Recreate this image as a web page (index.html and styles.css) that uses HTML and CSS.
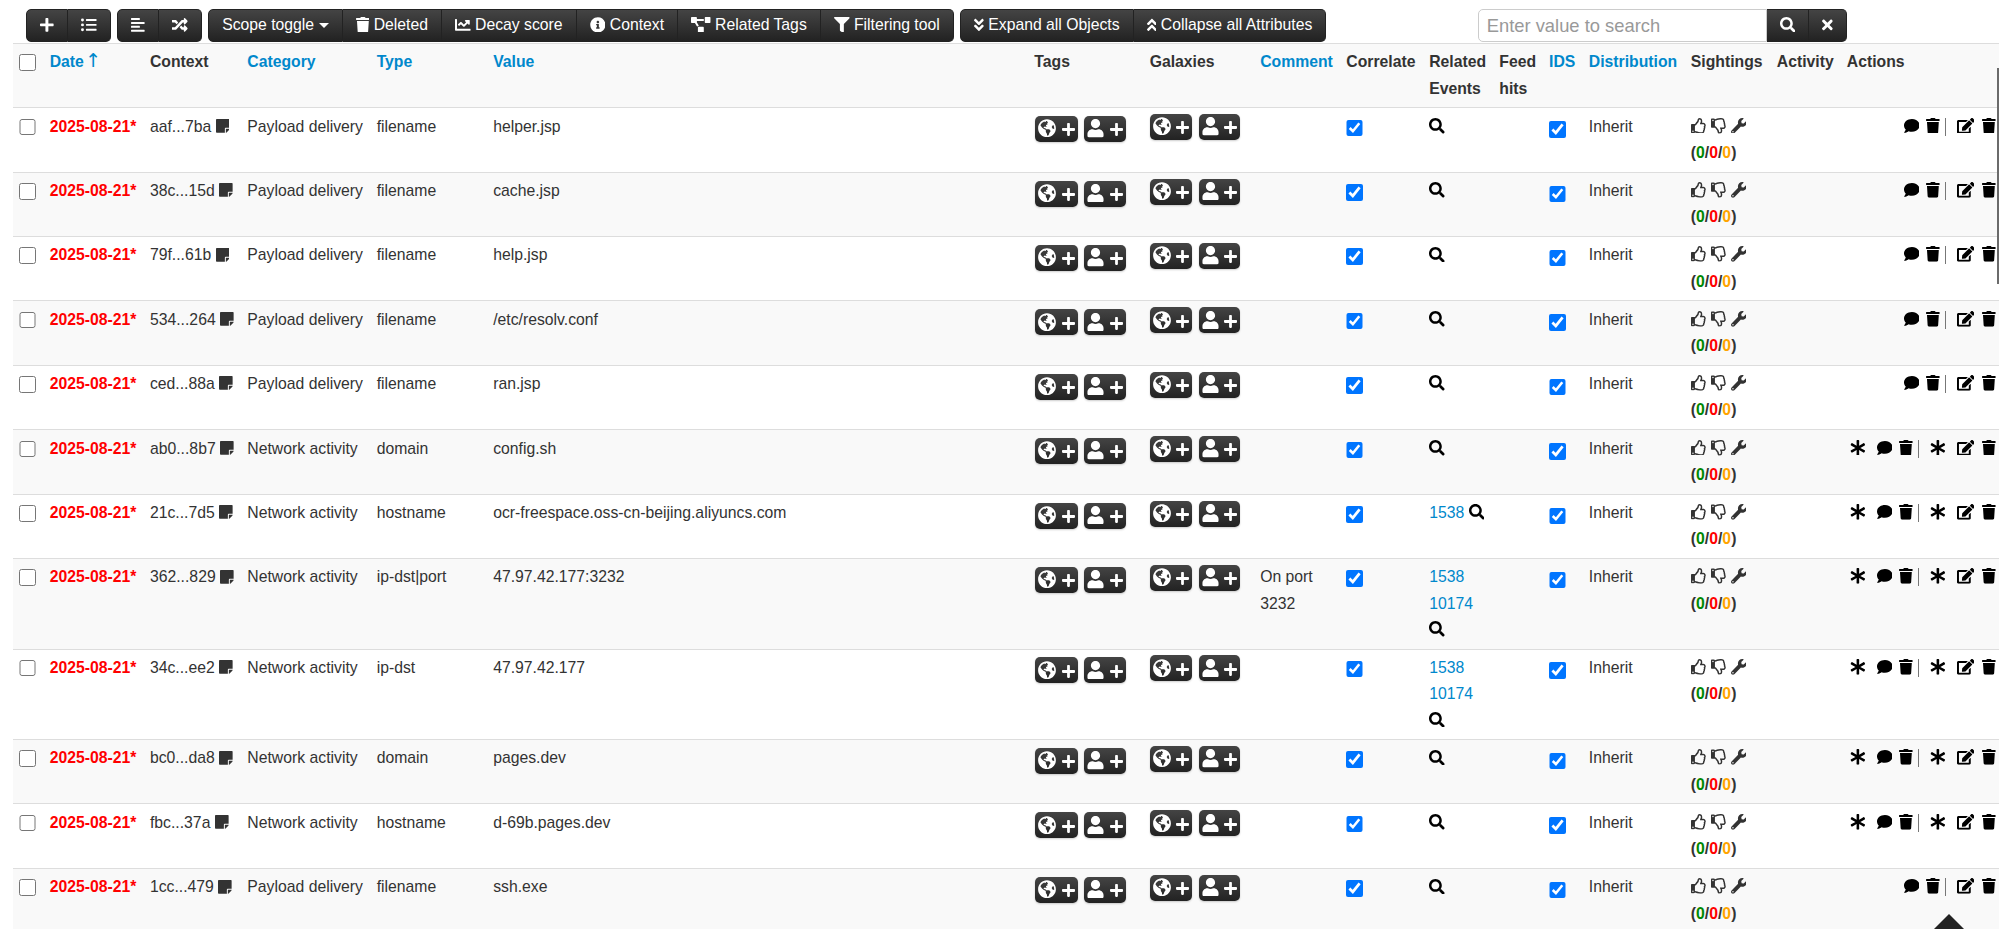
FILE: index.html
```html
<!DOCTYPE html>
<html lang="en">

<head>
  <meta charset="UTF-8">
  <meta name="viewport" content="width=device-width, initial-scale=1.0">
  <title>Event attributes</title>
  <link rel="stylesheet" href="styles.css">
</head>

<body>
  <svg class="sprite">
    <symbol id="plus" viewBox="0 0 448 512"><path d="M416 208H272V64c0-17.67-14.33-32-32-32h-32c-17.67 0-32 14.33-32 32v144H32c-17.67 0-32 14.33-32 32v32c0 17.67 14.33 32 32 32h144v144c0 17.67 14.33 32 32 32h32c17.67 0 32-14.33 32-32V304h144c17.67 0 32-14.33 32-32v-32c0-17.67-14.33-32-32-32z"/></symbol>
    <symbol id="list" viewBox="0 0 512 512"><path d="M48 48a48 48 0 1 0 48 48 48 48 0 0 0-48-48zm0 160a48 48 0 1 0 48 48 48 48 0 0 0-48-48zm0 160a48 48 0 1 0 48 48 48 48 0 0 0-48-48zm448 16H176a16 16 0 0 0-16 16v32a16 16 0 0 0 16 16h320a16 16 0 0 0 16-16v-32a16 16 0 0 0-16-16zm0-320H176a16 16 0 0 0-16 16v32a16 16 0 0 0 16 16h320a16 16 0 0 0 16-16V80a16 16 0 0 0-16-16zm0 160H176a16 16 0 0 0-16 16v32a16 16 0 0 0 16 16h320a16 16 0 0 0 16-16v-32a16 16 0 0 0-16-16z"/></symbol>
    <symbol id="align" viewBox="0 0 448 512"><path d="M12.83 352h262.34A12.82 12.82 0 0 0 288 339.17v-38.34A12.82 12.82 0 0 0 275.17 288H12.83A12.82 12.82 0 0 0 0 300.83v38.34A12.82 12.82 0 0 0 12.83 352zm0-256h262.34A12.82 12.82 0 0 0 288 83.17V44.83A12.82 12.82 0 0 0 275.17 32H12.83A12.82 12.82 0 0 0 0 44.83v38.34A12.82 12.82 0 0 0 12.83 96zM432 160H16a16 16 0 0 0-16 16v32a16 16 0 0 0 16 16h416a16 16 0 0 0 16-16v-32a16 16 0 0 0-16-16zm0 256H16a16 16 0 0 0-16 16v32a16 16 0 0 0 16 16h416a16 16 0 0 0 16-16v-32a16 16 0 0 0-16-16z"/></symbol>
    <symbol id="random" viewBox="0 0 512 512"><path d="M504.971 359.029c9.373 9.373 9.373 24.569 0 33.941l-80 79.984c-15.01 15.01-40.971 4.49-40.971-16.971V416h-58.785a12.004 12.004 0 0 1-8.773-3.812l-70.556-75.596 53.333-57.143L352 336h32v-39.981c0-21.438 25.943-31.998 40.971-16.971l80 79.981zM12 176h84l52.781 56.551 53.333-57.143-70.556-75.596A11.999 11.999 0 0 0 122.785 96H12c-6.627 0-12 5.373-12 12v56c0 6.627 5.373 12 12 12zm372 0v39.984c0 21.46 25.961 31.98 40.971 16.971l80-79.984c9.373-9.373 9.373-24.569 0-33.941l-80-79.981C409.943 24.021 384 34.582 384 56.019V96h-58.785a12.004 12.004 0 0 0-8.773 3.812L96 336H12c-6.627 0-12 5.373-12 12v56c0 6.627 5.373 12 12 12h110.785c3.326 0 6.503-1.381 8.773-3.812L352 176h32z"/></symbol>
    <symbol id="trash" viewBox="0 0 448 512"><path d="M432 32H312l-9.4-18.7A24 24 0 0 0 281.1 0H166.8a23.72 23.72 0 0 0-21.4 13.3L136 32H16A16 16 0 0 0 0 48v32a16 16 0 0 0 16 16h416a16 16 0 0 0 16-16V48a16 16 0 0 0-16-16zM53.2 467a48 48 0 0 0 47.9 45h245.8a48 48 0 0 0 47.9-45L416 128H32z"/></symbol>
    <symbol id="chart" viewBox="0 0 512 512"><path d="M496 384H64V80c0-8.84-7.16-16-16-16H16C7.16 64 0 71.16 0 80v336c0 17.67 14.33 32 32 32h464c8.84 0 16-7.16 16-16v-32c0-8.84-7.16-16-16-16zM464 96H345.94c-21.38 0-32.09 25.85-16.97 40.97l32.4 32.4L288 242.75l-73.37-73.37c-12.5-12.5-32.76-12.5-45.25 0l-68.69 68.69c-6.25 6.25-6.25 16.38 0 22.63l22.62 22.62c6.25 6.25 16.38 6.25 22.63 0L192 237.25l73.37 73.37c12.5 12.5 32.76 12.5 45.25 0l96-96 32.4 32.4c15.12 15.12 40.97 4.41 40.97-16.97V112c.01-8.84-7.15-16-15.99-16z"/></symbol>
    <symbol id="info" viewBox="0 0 512 512"><path d="M256 8C119.043 8 8 119.083 8 256c0 136.997 111.043 248 248 248s248-111.003 248-248C504 119.083 392.957 8 256 8zm0 110c23.196 0 42 18.804 42 42s-18.804 42-42 42-42-18.804-42-42 18.804-42 42-42zm56 254c0 6.627-5.373 12-12 12h-88c-6.627 0-12-5.373-12-12v-24c0-6.627 5.373-12 12-12h12v-64h-12c-6.627 0-12-5.373-12-12v-24c0-6.627 5.373-12 12-12h64c6.627 0 12 5.373 12 12v100h12c6.627 0 12 5.373 12 12v24z"/></symbol>
    <symbol id="diagram" viewBox="0 0 640 512"><path d="M384 320H256c-17.67 0-32 14.33-32 32v128c0 17.67 14.33 32 32 32h128c17.67 0 32-14.33 32-32V352c0-17.67-14.33-32-32-32zM192 32c0-17.67-14.33-32-32-32H32C14.33 0 0 14.33 0 32v128c0 17.67 14.33 32 32 32h95.72l73.16 128.04C211.98 300.98 232.4 288 256 288h.28L192 175.51V128h224V64H192V32zM608 0H480c-17.67 0-32 14.33-32 32v128c0 17.67 14.33 32 32 32h128c17.67 0 32-14.33 32-32V32c0-17.67-14.33-32-32-32z"/></symbol>
    <symbol id="filter" viewBox="0 0 512 512"><path d="M487.976 0H24.028C2.71 0-8.047 25.866 7.058 40.971L192 225.941V432c0 7.831 3.821 15.17 10.237 19.662l80 55.98C298.02 518.69 320 507.493 320 487.98V225.941l184.947-184.97C520.021 25.896 509.338 0 487.976 0z"/></symbol>
    <symbol id="down" viewBox="0 0 320 512"><path d="M143 256.3L7 120.3c-9.4-9.4-9.4-24.6 0-33.9l22.6-22.6c9.4-9.4 24.6-9.4 33.9 0l96.4 96.4 96.4-96.4c9.4-9.4 24.6-9.4 33.9 0L313 86.3c9.4 9.4 9.4 24.6 0 33.9l-136 136c-9.4 9.5-24.6 9.5-34 .1zm34 192l136-136c9.4-9.4 9.4-24.6 0-33.9l-22.6-22.6c-9.4-9.4-24.6-9.4-33.9 0L160 352.1l-96.4-96.4c-9.4-9.4-24.6-9.4-33.9 0L7 278.3c-9.4 9.4-9.4 24.6 0 33.9l136 136c9.4 9.5 24.6 9.5 34 .1z"/></symbol>
    <symbol id="search" viewBox="0 0 512 512"><path d="M505 442.7L405.3 343c-4.5-4.5-10.6-7-17-7H372c27.6-35.3 44-79.7 44-128C416 93.1 322.9 0 208 0S0 93.1 0 208s93.1 208 208 208c48.3 0 92.7-16.4 128-44v16.3c0 6.4 2.5 12.5 7 17l99.7 99.7c9.4 9.4 24.6 9.4 33.9 0l28.3-28.3c9.4-9.4 9.4-24.6.1-34zM208 336c-70.7 0-128-57.2-128-128 0-70.7 57.2-128 128-128 70.7 0 128 57.2 128 128 0 70.7-57.2 128-128 128z"/></symbol>
    <symbol id="times" viewBox="0 0 352 512"><path d="M242.72 256l100.07-100.07c12.28-12.28 12.28-32.19 0-44.48l-22.24-22.24c-12.28-12.28-32.19-12.28-44.48 0L176 189.28 75.93 89.21c-12.28-12.28-32.19-12.28-44.48 0L9.21 111.45c-12.28 12.28-12.28 32.19 0 44.48L109.28 256 9.21 356.07c-12.28 12.28-12.28 32.19 0 44.48l22.24 22.24c12.28 12.28 32.2 12.28 44.48 0L176 322.72l100.07 100.07c12.28 12.28 32.2 12.28 44.48 0l22.24-22.24c12.28-12.28 12.28-32.19 0-44.48L242.72 256z"/></symbol>
    <symbol id="note" viewBox="0 0 448 512"><path d="M312 320h136V56c0-13.3-10.7-24-24-24H24C10.7 32 0 42.7 0 56v400c0 13.3 10.7 24 24 24h264V344c0-13.2 10.8-24 24-24zm129 55l-98 98c-4.5 4.5-10.6 7-17 7h-6V352h128v6.1c0 6.3-2.5 12.4-7 16.9z"/></symbol>
    <symbol id="comment" viewBox="0 0 512 512"><path d="M256 32C114.6 32 0 125.1 0 240c0 49.6 21.4 95 57 130.7C44.5 421.1 2.7 466 2.2 466.5c-2.2 2.3-2.8 5.7-1.5 8.7S4.8 480 8 480c66.3 0 116-31.8 140.6-51.4 32.7 12.3 69 19.4 107.4 19.4 141.4 0 256-93.1 256-208S397.4 32 256 32z"/></symbol>
    <symbol id="wrench" viewBox="0 0 512 512"><path d="M507.73 109.1c-2.24-9.03-13.54-12.09-20.12-5.51l-74.36 74.36-67.88-11.31-11.31-67.88 74.36-74.36c6.62-6.62 3.43-17.9-5.66-20.16-47.38-11.74-99.55.91-136.58 37.93-39.64 39.64-50.55 97.1-34.05 147.2L18.74 402.76c-24.99 24.99-24.99 65.51 0 90.5 24.99 24.99 65.51 24.99 90.5 0l213.21-213.21c50.12 16.71 107.47 5.68 147.37-34.22 37.07-37.07 49.7-89.32 37.91-136.73zM64 472c-13.25 0-24-10.75-24-24 0-13.26 10.75-24 24-24s24 10.74 24 24c0 13.25-10.75 24-24 24z"/></symbol>
    <symbol id="user" viewBox="0 0 448 512"><path d="M224 256c70.7 0 128-57.3 128-128S294.7 0 224 0 96 57.3 96 128s57.3 128 128 128zm89.6 32h-16.7c-22.2 10.2-46.9 16-72.9 16s-50.6-5.8-72.9-16h-16.7C60.2 288 0 348.2 0 422.4V464c0 26.5 21.5 48 48 48h352c26.5 0 48-21.5 48-48v-41.6c0-74.2-60.2-134.4-134.4-134.4z"/></symbol>
    <symbol id="globe" viewBox="0 0 496 512"><path d="M248 8C111.03 8 0 119.03 0 256s111.03 248 248 248 248-111.03 248-248S384.97 8 248 8zm82.29 357.6c-3.9 3.88-7.99 7.95-11.31 11.28-2.99 3-5.1 6.7-6.17 10.71-1.51 5.66-2.73 11.38-4.77 16.87l-17.39 46.85c-13.76 3-28 4.69-42.65 4.69v-27.38c1.69-12.62-7.64-36.26-22.63-51.25-6-6-9.37-14.14-9.37-22.63v-32.01c0-11.64-6.27-22.34-16.46-27.97-14.37-7.95-34.81-19.06-48.81-26.11-11.48-5.78-22.1-13.14-31.65-21.75l-.8-.72a114.792 114.792 0 0 1-18.06-20.74c-9.38-13.77-24.66-36.42-34.59-51.14 20.47-45.5 57.36-82.04 103.2-101.89l24.01 12.01C203.48 89.74 216 82.01 216 70.11v-11.3c7.99-1.29 16.12-2.11 24.39-2.42l28.3 28.3c6.25 6.25 6.25 16.38 0 22.63L264 112l-10.34 10.34c-3.12 3.12-3.12 8.19 0 11.31l4.69 4.69c3.12 3.12 3.12 8.19 0 11.31l-8 8a8.008 8.008 0 0 1-5.66 2.34h-8.99c-2.08 0-4.08.81-5.58 2.27l-9.92 9.65a8.008 8.008 0 0 0-1.58 9.31l15.59 31.19c2.66 5.32-1.21 11.58-7.15 11.58h-5.64c-1.93 0-3.79-.7-5.24-1.96l-9.28-8.06a16.017 16.017 0 0 0-15.55-3.1l-31.17 10.39a11.95 11.95 0 0 0-8.17 11.34c0 4.53 2.56 8.66 6.61 10.69l11.08 5.54c9.41 4.71 19.79 7.16 30.31 7.16s22.59 27.29 32 32h66.75c8.49 0 16.62 3.37 22.63 9.37l13.69 13.69a30.503 30.503 0 0 1 8.93 21.57 46.536 46.536 0 0 1-13.72 32.98zM417 274.25c-5.79-1.45-10.84-5-14.15-9.97l-17.98-26.97a23.97 23.97 0 0 1 0-26.62l19.59-29.38c2.32-3.47 5.5-6.29 9.24-8.15l12.98-6.49C440.2 193.59 448 223.87 448 256c0 8.67-.74 17.16-1.82 25.54L417 274.25z"/></symbol>
    <symbol id="thumb" viewBox="0 0 512 512"><path d="M466.27 286.69C475.04 271.84 480 256 480 236.85c0-44.015-37.218-85.58-85.82-85.58H357.7c4.92-12.81 8.85-28.13 8.85-46.54C366.55 31.936 328.86 0 271.28 0c-61.607 0-58.093 94.933-71.76 108.6-22.747 22.747-49.615 66.447-68.76 83.4H32c-17.673 0-32 14.327-32 32v240c0 17.673 14.327 32 32 32h64c14.893 0 27.408-10.174 30.978-23.95 44.509 1.001 75.06 39.94 177.802 39.94 7.22 0 15.22.01 22.22.01 77.117 0 111.986-39.423 112.94-95.33 13.319-18.425 20.299-43.122 17.34-66.99 9.854-18.452 13.664-40.343 8.99-62.99zm-61.75 53.83c12.56 21.13 1.26 49.41-13.94 57.57 7.7 48.78-17.608 65.9-53.12 65.9h-37.82c-71.639 0-118.029-37.82-171.64-37.82V240h10.92c28.36 0 67.98-70.89 94.54-97.46 28.36-28.36 18.91-75.63 37.82-94.54 47.27 0 47.27 32.98 47.27 56.73 0 39.17-28.36 56.72-28.36 94.54h103.99c21.11 0 37.73 18.91 37.82 37.82.09 18.9-12.82 37.81-22.27 37.81 13.489 14.555 16.371 45.236-5.21 65.62zM88 432c0 13.255-10.745 24-24 24s-24-10.745-24-24 10.745-24 24-24 24 10.745 24 24z"/></symbol>
    <symbol id="asterisk" viewBox="0 0 512 512"><path d="M478.21 334.093L336 256l142.21-78.093c11.795-6.477 15.961-21.384 9.232-33.037l-19.48-33.741c-6.728-11.653-21.72-15.499-33.227-8.523L296 186.718l3.475-162.204C299.763 11.061 288.937 0 275.48 0h-38.96c-13.456 0-24.283 11.061-23.994 24.514L216 186.718 77.265 102.607c-11.506-6.976-26.499-3.13-33.227 8.523l-19.48 33.741c-6.728 11.653-2.562 26.56 9.233 33.037L176 256 33.79 334.093c-11.795 6.477-15.961 21.384-9.232 33.037l19.48 33.741c6.728 11.653 21.721 15.499 33.227 8.523L216 325.282l-3.475 162.204C212.237 500.939 223.064 512 236.52 512h38.961c13.456 0 24.283-11.061 23.995-24.514L296 325.282l138.735 84.111c11.506 6.976 26.499 3.13 33.227-8.523l19.48-33.741c6.728-11.653 2.563-26.559-9.232-33.036z"/></symbol>
    <symbol id="edit" viewBox="0 0 576 512"><path d="M402.6 83.2l90.2 90.2c3.8 3.8 3.8 10 0 13.8L274.4 405.6l-92.8 10.3c-12.4 1.4-22.9-9.1-21.5-21.5l10.3-92.8L388.8 83.2c3.8-3.8 10-3.8 13.8 0zm162-22.9l-48.8-48.8c-15.2-15.2-39.9-15.2-55.2 0l-35.4 35.4c-3.8 3.8-3.8 10 0 13.8l90.2 90.2c3.8 3.8 10 3.8 13.8 0l35.4-35.4c15.2-15.3 15.2-40 0-55.2zM384 346.2V448H64V128h229.8c3.2 0 6.2-1.3 8.5-3.5l40-40c7.6-7.6 2.2-20.5-8.5-20.5H48C21.5 64 0 85.5 0 112v352c0 26.5 21.5 48 48 48h352c26.5 0 48-21.5 48-48V306.2c0-10.7-12.9-16-20.5-8.5l-40 40c-2.2 2.3-3.5 5.3-3.5 8.5z"/></symbol>
  </svg>

  <div class="toolbar">
    <div class="btn-group">
      <button class="btn"><svg class="icon narrow"><use href="#plus"/></svg></button>
      <button class="btn"><svg class="icon"><use href="#list"/></svg></button>
    </div>
    <div class="btn-group">
      <button class="btn"><svg class="icon narrow"><use href="#align"/></svg></button>
      <button class="btn"><svg class="icon"><use href="#random"/></svg></button>
    </div>
    <div class="btn-group">
      <button class="btn">Scope toggle <span class="caret"></span></button>
      <button class="btn"><svg class="icon narrow"><use href="#trash"/></svg> Deleted</button>
      <button class="btn"><svg class="icon"><use href="#chart"/></svg> Decay score</button>
      <button class="btn"><svg class="icon"><use href="#info"/></svg> Context</button>
      <button class="btn"><svg class="icon wide"><use href="#diagram"/></svg> Related Tags</button>
      <button class="btn"><svg class="icon"><use href="#filter"/></svg> Filtering tool</button>
    </div>
    <div class="btn-group">
      <button class="btn"><svg class="icon slim"><use href="#down"/></svg> Expand all Objects</button>
      <button class="btn"><svg class="icon slim flip"><use href="#down"/></svg> Collapse all Attributes</button>
    </div>
    <div class="search">
      <input type="text" class="search-input" placeholder="Enter value to search">
      <button class="btn"><svg class="icon"><use href="#search"/></svg></button>
      <button class="btn"><svg class="icon times"><use href="#times"/></svg></button>
    </div>
  </div>

  <table class="attributes">
    <thead>
      <tr>
        <th><input type="checkbox" class="select"></th>
        <th><a>Date <span class="arrow">↑</span></a></th>
        <th>Context</th>
        <th><a>Category</a></th>
        <th><a>Type</a></th>
        <th><a>Value</a></th>
        <th>Tags</th>
        <th>Galaxies</th>
        <th><a>Comment</a></th>
        <th>Correlate</th>
        <th>Related Events</th>
        <th>Feed hits</th>
        <th><a>IDS</a></th>
        <th><a>Distribution</a></th>
        <th>Sightings</th>
        <th>Activity</th>
        <th>Actions</th>
      </tr>
    </thead>
    <tbody id="rows"></tbody>
  </table>

  <div class="scroll-thumb"></div>
  <div class="to-top"></div>

  <script>
    const P = 'Payload delivery';
    const N = 'Network activity';

    // uuid, category, type, value, related events, comment
    const attributes = [
      ['aaf...7ba', P, 'filename', 'helper.jsp'],
      ['38c...15d', P, 'filename', 'cache.jsp'],
      ['79f...61b', P, 'filename', 'help.jsp'],
      ['534...264', P, 'filename', '/etc/resolv.conf'],
      ['ced...88a', P, 'filename', 'ran.jsp'],
      ['ab0...8b7', N, 'domain', 'config.sh'],
      ['21c...7d5', N, 'hostname', 'ocr-freespace.oss-cn-beijing.aliyuncs.com', [1538]],
      ['362...829', N, 'ip-dst|port', '47.97.42.177:3232', [1538, 10174], 'On port 3232'],
      ['34c...ee2', N, 'ip-dst', '47.97.42.177', [1538, 10174]],
      ['bc0...da8', N, 'domain', 'pages.dev'],
      ['fbc...37a', N, 'hostname', 'd-69b.pages.dev'],
      ['1cc...479', P, 'filename', 'ssh.exe']
    ];

    function icon(name, extra = '') {
      return `<svg class="icon ${extra}"><use href="#${name}"/></svg>`;
    }

    function tagButtons(cls) {
      return `<div class="tag-buttons ${cls}">
        <button class="tag-btn">${icon('globe', 'big')}${icon('plus', 'add')}</button>
        <button class="tag-btn">${icon('user', 'big person')}${icon('plus', 'add')}</button>
      </div>`;
    }

    function actions(category) {
      const enrich = category === N ? icon('asterisk', 'enrich') : '';
      return `<div class="actions">${enrich}${icon('comment', 'talk')}${icon('trash', 'narrow')}<span class="sep"></span>${enrich}${icon('edit', 'pen')}${icon('trash', 'narrow')}</div>`;
    }

    document.getElementById('rows').innerHTML = attributes.map(([uuid, category, type, value, related = [], comment = '']) => `
      <tr>
        <td><input type="checkbox" class="select"></td>
        <td class="date">2025-08-21*</td>
        <td>${uuid} ${icon('note', 'narrow note')}</td>
        <td>${category}</td>
        <td>${type}</td>
        <td>${value}</td>
        <td>${tagButtons('')}</td>
        <td>${tagButtons('galaxies')}</td>
        <td>${comment}</td>
        <td><input type="checkbox" class="correlate" checked></td>
        <td>${related.map(id => `<a>${id}</a> `).join('')}${icon('search', 'black')}</td>
        <td></td>
        <td><input type="checkbox" class="ids" checked></td>
        <td>Inherit</td>
        <td><div class="votes">${icon('thumb')}${icon('thumb', 'flip')}${icon('wrench')}</div>
          <b>(<span class="good">0</span>/<span class="bad">0</span>/<span class="expired">0</span>)</b></td>
        <td></td>
        <td>${actions(category)}</td>
      </tr>`).join('');
  </script>
</body>

</html>
```
FILE: styles.css
```css
* {
  box-sizing: border-box;
}

body {
  margin: 0;
  height: 929px;
  overflow: hidden;
  background: #fff;
  color: #333;
  font-family: "Liberation Sans", Arial, sans-serif;
  font-size: 15.75px;
  line-height: 26.25px;
}

.sprite {
  display: none;
}

.icon {
  width: 15.75px;
  height: 15.75px;
  fill: currentColor;
  vertical-align: -2px;
}

.narrow {
  width: 13.8px;
}

.wide {
  width: 19.7px;
}

.slim {
  width: 9.85px;
}

.times {
  width: 10.8px;
}

.flip {
  transform: scaleY(-1);
}

/* toolbar */

.toolbar {
  display: flex;
  height: 42.9px;
  padding: 9.4px 0 0 26.3px;
}

.btn-group {
  display: flex;
  height: 33px;
  margin-right: 6.4px;
}

.btn {
  height: 33px;
  padding: 0 13px 1px;
  border: 1px solid #222;
  border-left-width: 0;
  background: linear-gradient(#444, #222);
  color: #fff;
  font: inherit;
  line-height: 30px;
  white-space: nowrap;
}

.btn:first-child {
  border-left-width: 1px;
  border-radius: 5px 0 0 5px;
}

.btn:last-child {
  border-radius: 0 5px 5px 0;
}

.search .btn:not(:last-child) {
  border-radius: 0;
}

.caret {
  display: inline-block;
  border: 5.25px solid transparent;
  border-top-color: #fff;
  border-bottom: 0;
  vertical-align: 2px;
}

.search {
  display: flex;
  height: 33px;
  margin-left: 145px;
}

.search-input {
  width: 289px;
  height: 33px;
  padding: 0 8px;
  border: 1px solid #ccc;
  border-radius: 5px 0 0 5px;
  font: 18.375px "Liberation Sans", Arial, sans-serif;
}

.search-input::placeholder {
  color: #999;
}

/* attribute table */

.attributes {
  display: block;
  margin-left: 13.3px;
}

thead,
tbody {
  display: block;
}

tr {
  display: grid;
  grid-template-columns: 30.2px 100.3px 97.4px 129.3px 116.5px 541.2px 115.3px 110.5px 86.2px 82.8px 70.2px 49.8px 39.7px 102px 86px 70px 1fr;
  min-height: 64.4px;
  border-top: 1px solid #ddd;
}

thead tr,
tbody tr:nth-child(even) {
  background: #f9f9f9;
}

th,
td {
  display: block;
  padding: 5.4px 6px 5.4px 6.2px;
  text-align: left;
}

a {
  color: #0088cc;
}

.arrow {
  font: 19px/20px "DejaVu Sans", sans-serif;
  margin-left: -3px;
}

.date {
  color: #f00;
  font-weight: bold;
  white-space: nowrap;
}

input[type="checkbox"] {
  display: block;
  width: 16.5px;
  height: 16.5px;
  margin: 5px 0 0;
}

input.correlate {
  margin-top: 6px;
}

input.ids {
  margin-top: 7.5px;
}

.note {
  vertical-align: -2px;
}

.black {
  color: #000;
}

.tag-buttons {
  display: flex;
  gap: 6.5px;
  padding: 2.5px 0 0 1px;
}

.galaxies {
  padding: .5px 0 0;
}

.tag-btn {
  display: flex;
  gap: 5.4px;
  height: 26px;
  padding: 3.3px 3px;
  border: 0;
  border-radius: 5px;
  background: linear-gradient(#444, #222);
  color: #fff;
  box-shadow: 0 1px 2px rgba(0, 0, 0, .2);
}

.big {
  width: 18px;
  height: 18.4px;
}

.person {
  width: 17px;
}

.add {
  width: 13px;
  height: 15px;
  margin-top: 3px;
}

.votes {
  display: flex;
  gap: 4.2px;
  height: 26.25px;
  padding-top: 4px;
}

.good {
  color: #080;
}

.bad {
  color: #f00;
}

.expired {
  color: orange;
}

.actions {
  display: flex;
  justify-content: flex-end;
  height: 26px;
  padding-top: 4px;
  margin-right: -2.5px;
  color: #000;
}

.enrich {
  margin-right: 11.2px;
}

.talk {
  margin-right: 7px;
}

.sep {
  width: 1px;
  height: 18px;
  margin: 0 11px 0 4.3px;
  background: #777;
}

.pen {
  width: 17.7px;
  margin-right: 7.5px;
}

.scroll-thumb {
  position: absolute;
  top: 68px;
  right: 0;
  width: 2px;
  height: 216px;
  background: #6b6b6b;
}

.to-top {
  position: absolute;
  left: 1933.5px;
  top: 913.5px;
  border: 15.5px solid transparent;
  border-top: 0;
  border-bottom-color: #222;
}
```
